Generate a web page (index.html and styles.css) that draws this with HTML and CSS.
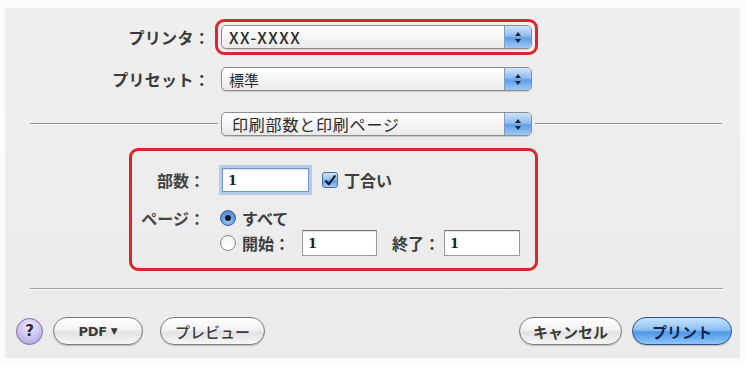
FILE: index.html
```html
<!DOCTYPE html>
<html lang="ja">
<head>
<meta charset="utf-8">
<title>プリント</title>
<link rel="stylesheet" href="styles.css">
</head>
<body>
<div class="panel">
  <div class="row row-printer">
    <div class="label">プリンタ：</div>
    <div class="hl">
      <div class="popup"><span class="ptext wide">XX-XXXX</span><span class="cap"><i class="up"></i><i class="dn"></i></span></div>
    </div>
  </div>
  <div class="row row-preset">
    <div class="label">プリセット：</div>
    <div class="popup"><span class="ptext">標準</span><span class="cap"><i class="up"></i><i class="dn"></i></span></div>
  </div>
  <div class="sec-row">
    <div class="line left"></div>
    <div class="popup sec"><span class="ptext">印刷部数と印刷ページ</span><span class="cap"><i class="up"></i><i class="dn"></i></span></div>
    <div class="line right"></div>
  </div>
  <div class="hl2">
    <div class="frow r1">
      <div class="glabel">部数：</div>
      <div class="field focus">1</div>
      <span class="check"><svg viewBox="0 0 16 16" width="16" height="16"><path d="M3.5 8.2 L6.8 11.6 L13.5 2.5" fill="none" stroke="#10182a" stroke-width="2.4" stroke-linecap="round" stroke-linejoin="round"/></svg></span>
      <span class="ctext">丁合い</span>
    </div>
    <div class="frow r2">
      <div class="glabel">ページ：</div>
      <span class="radio on"><i></i></span>
      <span class="ctext">すべて</span>
    </div>
    <div class="frow r3">
      <div class="glabel"></div>
      <span class="radio"></span>
      <span class="ctext">開始：</span>
      <div class="field small">1</div>
      <span class="ctext end">終了：</span>
      <div class="field small last">1</div>
    </div>
  </div>
  <div class="sep"></div>
  <div class="footer">
    <span class="help">?</span>
    <span class="btn pdf">PDF <span class="tri">▼</span></span>
    <span class="btn preview">プレビュー</span>
    <span class="spacer"></span>
    <span class="btn cancel">キャンセル</span>
    <span class="btn primary">プリント</span>
  </div>
</div>
</body>
</html>
```

FILE: styles.css
```css
* { box-sizing: border-box; }
html, body { margin: 0; padding: 0; background: #fbfbfb; }
body {
  font-family: "Noto Sans CJK JP", "Noto Sans", sans-serif;
  font-size: 16px;
  color: #3a3a3a;
}
.panel {
  margin: 8px 5px 0 5px;
  height: 350px;
  background: linear-gradient(#eeeeee, #ebebeb);
  padding-top: 11px;
  display: flex;
  flex-direction: column;
}
.row { display: flex; align-items: center; }
.label {
  width: 205px;
  text-align: right;
  font-weight: 600;
  color: #3a3a3a;
  letter-spacing: 0.3px;
}
.hl {
  margin-left: 5px;
  border: 3px solid #d8262c;
  border-radius: 9px;
  padding: 3px;
  background: #f4eeee;
}
.row-preset { margin-top: 12px; }
.row-preset .popup { margin-left: 11px; }
.popup {
  width: 311px;
  height: 24px;
  border: 1px solid #8d8d8d;
  border-radius: 5px;
  background: linear-gradient(#ffffff, #f3f3f3 60%, #e9e9e9);
  display: flex;
  align-items: center;
  box-shadow: 0 1px 1px rgba(0,0,0,0.15);
  overflow: hidden;
}
.ptext {
  flex: 1;
  padding-left: 7px;
  font-size: 15px;
  color: #2a2a2a;
  line-height: 1;
}
.ptext.wide { font-size: 16px; letter-spacing: 1.5px; font-weight: 500; }
.cap {
  width: 27px;
  height: 100%;
  background: linear-gradient(#cfe4fa, #8ebdf0 45%, #5f9ee6 55%, #9fcaf5);
  border-left: 1px solid #7f9cc4;
  display: flex;
  flex-direction: column;
  align-items: center;
  justify-content: center;
  gap: 3px;
}
.cap i {
  display: block;
  width: 0; height: 0;
  border-left: 3px solid transparent;
  border-right: 3px solid transparent;
}
.cap .up { border-bottom: 4px solid #1c2433; }
.cap .dn { border-top: 4px solid #1c2433; }
.sec-row {
  margin-top: 21px;
  display: flex;
  align-items: center;
}
.line { height: 2px; border-top: 1px solid #8f8f8f; border-bottom: 1px solid #f8f8f8; }
.line.left { margin-left: 25px; width: 188px; margin-right: 3px; }
.line.right { margin-left: 3px; width: 187px; }
.popup.sec .ptext { padding-left: 10px; font-size: 16px; letter-spacing: 0.8px; }
.hl2 {
  margin-top: 12px;
  margin-left: 124px;
  width: 409px;
  height: 123px;
  border: 3px solid #d8262c;
  border-radius: 9px;
  padding: 17px 0 0 0;
  display: flex;
  flex-direction: column;
}
.frow { display: flex; align-items: center; }
.frow.r1 { height: 24px; }
.frow.r2 { height: 20px; margin-top: 16px; }
.frow.r3 { height: 26px; margin-top: 2px; }
.glabel {
  width: 73px;
  margin-right: 16px;
  text-align: right;
  font-weight: 600;
  color: #454545;
  line-height: 1;
}
.ctext { font-weight: 600; color: #3d3d3d; line-height: 1; }
.field {
  height: 24px;
  background: #fff;
  border: 1px solid #9a9a9a;
  border-top-color: #6f6f6f;
  box-shadow: inset 0 1px 1px rgba(0,0,0,0.12);
  font-family: "DejaVu Serif", serif;
  font-weight: 700;
  font-size: 13px;
  color: #222;
  padding-left: 5px;
  display: flex;
  align-items: center;
}
.field.focus {
  width: 87px;
  margin-left: 1px;
  border-color: #6f94c8;
  box-shadow: 0 0 0 3px #b4cdea, inset 0 1px 1px rgba(0,0,0,0.12);
}
.field.small { width: 75px; height: 26px; margin-left: 12px; }
.field.small.last { width: 76px; margin-left: 4px; }
.check {
  width: 16px; height: 16px;
  margin-left: 13px;
  margin-right: 6px;
  border: 1px solid #4b6e9c;
  border-radius: 3px;
  background: linear-gradient(#d2e6fb, #8bbbee 50%, #5c9be2 55%, #a6cdf5);
  display: flex;
}
.radio {
  width: 16px; height: 16px;
  border-radius: 50%;
  border: 1px solid #8a8a8a;
  background: linear-gradient(#f4f4f4, #ffffff);
  margin-left: -1px;
  margin-right: 6px;
  display: flex;
  align-items: center;
  justify-content: center;
}
.radio.on {
  border-color: #3d5e93;
  background: radial-gradient(circle at 50% 70%, #9fcaf5, #5c97e0 60%, #4a7fcc);
}
.radio.on i { width: 6px; height: 6px; border-radius: 50%; background: #121a2a; }
.ctext.end { margin-left: 15px; }
.sep {
  margin-top: 17px;
  margin-left: 25px;
  width: 693px;
  height: 2px;
  border-top: 1px solid #a4a4a4;
  border-bottom: 1px solid #f8f8f8;
}
.footer {
  margin-top: 27px;
  padding-left: 11px;
  padding-right: 8px;
  display: flex;
  align-items: center;
  height: 28px;
}
.help {
  width: 27px; height: 27px;
  border-radius: 50%;
  border: 1px solid #776ea6;
  background: radial-gradient(circle at 50% 30%, #f0ecfc, #c6bdec 60%, #a59bd6);
  display: flex;
  align-items: center;
  justify-content: center;
  font-family: "DejaVu Sans", sans-serif;
  font-weight: 700;
  font-size: 15px;
  color: #2a2a3a;
}
.btn {
  height: 28px;
  border: 1px solid #7b7b7b;
  border-radius: 14px;
  background: linear-gradient(#ffffff, #f2f2f2 45%, #e2e2e2 55%, #f6f6f6);
  box-shadow: 0 1px 1px rgba(0,0,0,0.2);
  display: flex;
  align-items: center;
  justify-content: center;
  font-weight: 500;
  font-size: 15px;
  color: #3a3a3a;
  line-height: 1;
}
.btn.pdf {
  width: 90px;
  margin-left: 10px;
  font-family: "DejaVu Sans", sans-serif;
  font-weight: 700;
  font-size: 13px;
  letter-spacing: -0.3px;
}
.btn.pdf .tri { font-size: 9px; margin-left: 4px; }
.btn.preview { width: 105px; margin-left: 17px; }
.spacer { flex: 1; }
.btn.cancel { width: 103px; font-weight: 700; }
.btn.primary {
  width: 100px;
  margin-left: 10px;
  border-color: #2f4f86;
  background: linear-gradient(#c9e3fb, #8cc0f3 45%, #4f97e8 55%, #8cc8f8);
  color: #15244a;
  font-weight: 700;
}
```
